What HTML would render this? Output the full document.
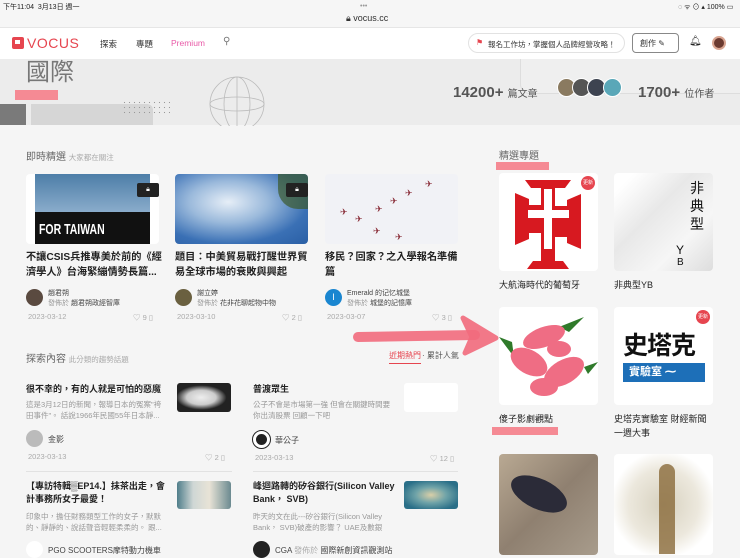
<!DOCTYPE html>
<html><head><meta charset="utf-8"><style>
*{margin:0;padding:0;box-sizing:border-box}
body{width:740px;height:555px;overflow:hidden;background:#f5f5f5;font-family:"Liberation Sans","Noto Sans CJK TC",sans-serif;position:relative;color:#222}
.a{position:absolute;white-space:nowrap}
.t{font-size:10.2px;font-weight:bold;line-height:15px;color:#222}
.s{font-size:7.5px;color:#999;line-height:11px}
.d{font-size:7.5px;color:#aaa}
.g{font-size:7px;color:#999}
.sm{font-size:7px;color:#444}
.av{position:absolute;border-radius:50%}
.tile{position:absolute;background:#fff;border-radius:4px;overflow:hidden}
.cap{position:absolute;font-size:9px;color:#222}
</style></head><body>
<!-- status bar -->
<div class="a" style="left:0;top:0;width:740px;height:27px;background:#f6f6f6"></div>
<div class="a" style="left:3px;top:2px;font-size:7px;color:#222">下午11:04&nbsp;&nbsp;3月13日 週一</div>
<div class="a" style="left:360px;top:3px;font-size:7px;color:#999">•••</div>
<div class="a" style="left:346px;top:13px;font-size:9px;color:#333">🔒︎ vocus.cc</div>
<div class="a" style="left:678px;top:2px;font-size:7px;color:#222">◌ ᯤ ⊙ ▴ 100% ▭</div>
<!-- nav -->
<div class="a" style="left:0;top:27px;width:740px;height:32px;background:#fff;border-top:1px solid #e6e6e6"></div>
<div class="a" style="left:12px;top:37px;width:12px;height:12px;background:#e6454f;border-radius:2px"></div>
<div class="a" style="left:15px;top:40px;width:5px;height:4px;background:#fff"></div>
<div class="a" style="left:27px;top:35px;font-size:14px;color:#e6454f;letter-spacing:0.5px">VOCUS</div>
<div class="a" style="left:100px;top:38px;font-size:8.5px;color:#333">探索</div>
<div class="a" style="left:136px;top:38px;font-size:8.5px;color:#333">專題</div>
<div class="a" style="left:171px;top:38px;font-size:8.5px;color:#e85aa7">Premium</div>
<div class="a" style="left:223px;top:36px;font-size:10px;color:#777">⚲</div>
<div class="a" style="left:468px;top:33px;width:157px;height:20px;border:1px solid #e2e2e2;border-radius:10px;background:#fff"></div>
<div class="a" style="left:476px;top:38px;font-size:8px;color:#e6454f">⚑</div>
<div class="a" style="left:488px;top:39px;font-size:7.5px;color:#333">報名工作坊，掌握個人品牌經營攻略！</div>
<div class="a" style="left:632px;top:33px;width:47px;height:20px;border:1px solid #888;border-radius:4px;background:#fff"></div>
<div class="a" style="left:640px;top:38px;font-size:8px;color:#333">創作 ✎</div>
<div class="a" style="left:689px;top:36px;font-size:10px;color:#222">🔔︎</div>
<div class="av" style="left:712px;top:36px;width:14px;height:14px;background:#6b3a30;border:2px solid #d9a591"></div>
<!-- hero -->
<div class="a" style="left:0;top:59px;width:740px;height:66px;background:#ececec"></div>
<div class="a" style="left:520px;top:59px;width:220px;height:35px;border-bottom:1px solid #ddd;border-left:1px solid #ddd;border-bottom-left-radius:10px;background:#efefef"></div>
<div class="a" style="left:15px;top:90px;width:43px;height:10px;background:#f58a94"></div>
<div class="a" style="left:26px;top:58px;font-size:24px;line-height:30px;color:#777">國際</div>
<div class="a" style="left:0;top:104px;width:26px;height:21px;background:#7a7a7a"></div>
<div class="a" style="left:31px;top:104px;width:122px;height:21px;background:#d6d6d6;border-radius:0 6px 0 0"></div>
<div class="a" style="left:122px;top:100px;width:48px;height:16px;background-image:radial-gradient(#999 0.6px,transparent 0.8px);background-size:5px 5px"></div>
<svg class="a" style="left:205px;top:74px" width="64" height="52"><circle cx="32" cy="30" r="27" fill="none" stroke="#bbb" stroke-width="0.8"/><ellipse cx="32" cy="30" rx="13" ry="27" fill="none" stroke="#bbb" stroke-width="0.8"/><ellipse cx="32" cy="30" rx="27" ry="7" fill="none" stroke="#bbb" stroke-width="0.8"/><line x1="32" y1="3" x2="32" y2="57" stroke="#bbb" stroke-width="0.8"/></svg>
<div class="a" style="left:453px;top:84px;font-size:15px;font-weight:bold;color:#555">14200+ <span style="font-size:10px;font-weight:normal">篇文章</span></div>
<div class="av" style="left:557px;top:78px;width:19px;height:19px;background:#8a7a60;border:1px solid #fff"></div>
<div class="av" style="left:572px;top:78px;width:19px;height:19px;background:#555;border:1px solid #fff"></div>
<div class="av" style="left:587px;top:78px;width:19px;height:19px;background:#3d4350;border:1px solid #fff"></div>
<div class="av" style="left:603px;top:78px;width:19px;height:19px;background:#5aa7b8;border:1px solid #fff"></div>
<div class="a" style="left:638px;top:84px;font-size:15px;font-weight:bold;color:#555">1700+ <span style="font-size:10px;font-weight:normal">位作者</span></div>
<!-- 即時精選 -->
<div class="a" style="left:26px;top:148px;font-size:10px;color:#666">即時精選 <span style="font-size:7.5px;color:#aaa">大家都在關注</span></div>
<div class="a" style="left:26px;top:174px;width:133px;height:70px;background:#fff;border-radius:4px;overflow:hidden">
 <div class="a" style="left:9px;top:0;width:115px;height:70px;background:#111"></div>
 <div class="a" style="left:9px;top:0;width:115px;height:38px;background:linear-gradient(#4d7ea8,#8aaccb)"></div>
 <div class="a" style="left:13px;top:47px;font-size:15px;color:#fff;transform:scaleX(0.7);transform-origin:left;font-weight:bold">FOR TAIWAN</div>
 <div class="a" style="left:111px;top:9px;width:22px;height:14px;background:#222;border-radius:2px;color:#fff;font-size:7px;text-align:center;line-height:14px">🔒︎</div>
</div>
<div class="a" style="left:175px;top:174px;width:133px;height:70px;border-radius:4px;overflow:hidden;background:radial-gradient(ellipse at 40% 40%,#e6eef7 0%,#9ab9db 35%,#3a70b5 70%,#2a5fa5 100%)">
 <div class="a" style="right:0;top:0;width:30px;height:35px;background:#3c5a2c;border-radius:0 0 0 20px;opacity:.7"></div>
 <div class="a" style="left:111px;top:9px;width:22px;height:14px;background:#222;border-radius:2px;color:#fff;font-size:7px;text-align:center;line-height:14px">🔒︎</div>
</div>
<div class="a" style="left:325px;top:174px;width:133px;height:70px;background:#f1f2f6;border-radius:4px;color:#8a2f3a;font-size:9px;line-height:10px">
 <div class="a" style="left:100px;top:5px">✈</div><div class="a" style="left:80px;top:14px">✈</div><div class="a" style="left:65px;top:22px">✈</div><div class="a" style="left:50px;top:30px">✈</div><div class="a" style="left:15px;top:33px">✈</div><div class="a" style="left:30px;top:40px">✈</div><div class="a" style="left:48px;top:52px">✈</div><div class="a" style="left:70px;top:58px">✈</div>
</div>
<div class="a t" style="left:26px;top:250px;white-space:normal;width:142px">不讓CSIS兵推專美於前的《經濟學人》台海緊繃情勢長篇...</div>
<div class="a t" style="left:175px;top:250px;white-space:normal;width:136px">題目：中美貿易戰打醒世界貿易全球市場的衰敗與興起</div>
<div class="a t" style="left:325px;top:250px;white-space:normal;width:136px">移民？回家？之入學報名準備篇</div>
<div class="av" style="left:26px;top:289px;width:17px;height:17px;background:#5a4a40"></div>
<div class="a sm" style="left:48px;top:288px">趙君朔</div><div class="a g" style="left:48px;top:298px">發佈於 <span style="color:#444">趙君朔政經智庫</span></div>
<div class="av" style="left:175px;top:289px;width:17px;height:17px;background:#6a6040"></div>
<div class="a sm" style="left:197px;top:288px">謝立婷</div><div class="a g" style="left:197px;top:298px">發佈於 <span style="color:#444">花非花聊起物中物</span></div>
<div class="av" style="left:325px;top:289px;width:17px;height:17px;background:#1a86d0;color:#fff;font-size:9px;text-align:center;line-height:17px">I</div>
<div class="a sm" style="left:347px;top:288px">Emerald 的记忆城堡</div><div class="a g" style="left:347px;top:298px">發佈於 <span style="color:#444">城堡的記憶庫</span></div>
<div class="a d" style="left:28px;top:312px">2023-03-12</div><div class="a d" style="left:133px;top:312px">♡ 9 ▯</div>
<div class="a d" style="left:177px;top:312px">2023-03-10</div><div class="a d" style="left:282px;top:312px">♡ 2 ▯</div>
<div class="a d" style="left:327px;top:312px">2023-03-07</div><div class="a d" style="left:432px;top:312px">♡ 3 ▯</div>
<!-- 探索內容 -->
<div class="a" style="left:26px;top:350px;font-size:10px;color:#666">探索內容 <span style="font-size:7.5px;color:#aaa">此分類的趨勢話題</span></div>
<div class="a" style="left:389px;top:350px;font-size:8px;color:#e6454f;border-bottom:1.5px solid #e6454f;padding-bottom:2px">近期熱門</div>
<div class="a" style="left:422px;top:350px;font-size:8px;color:#555">· 累計人氣</div>
<div class="a" style="left:26px;top:383px;font-size:9px;font-weight:bold;line-height:13px">很不幸的，有的人就是可怕的惡魔</div>
<div class="a s" style="left:26px;top:399px;white-space:normal;width:140px">這是3月12日的新聞，報導日本的冤案"袴田事件"。 話說1966年民國55年日本靜...</div>
<div class="a" style="left:177px;top:383px;width:54px;height:29px;background:radial-gradient(ellipse at 45% 50%,#eee 0%,#ccc 35%,#222 60%);border-radius:3px"></div>
<div class="av" style="left:26px;top:430px;width:17px;height:17px;background:#bbb"></div>
<div class="a sm" style="left:48px;top:434px;font-size:8px">金影</div>
<div class="a d" style="left:28px;top:452px">2023-03-13</div><div class="a d" style="left:205px;top:452px">♡ 2 ▯</div>
<div class="a" style="left:253px;top:383px;font-size:9px;font-weight:bold;line-height:13px">普渡眾生</div>
<div class="a s" style="left:253px;top:399px;white-space:normal;width:140px">公子不會是市場第一強 但會在關鍵時間要你出清股票 回顧一下吧</div>
<div class="a" style="left:404px;top:383px;width:54px;height:29px;background:#fff;border-radius:3px"></div>
<div class="av" style="left:253px;top:431px;width:17px;height:17px;background:#222;border:3px solid #fff;outline:1px solid #222"></div>
<div class="a sm" style="left:275px;top:435px;font-size:8px">華公子</div>
<div class="a d" style="left:255px;top:453px">2023-03-13</div><div class="a d" style="left:430px;top:453px">♡ 12 ▯</div>
<div class="a" style="left:26px;top:471px;width:206px;height:1px;background:#e2e2e2"></div>
<div class="a" style="left:253px;top:471px;width:205px;height:1px;background:#e2e2e2"></div>
<div class="a" style="left:26px;top:480px;white-space:normal;width:142px;font-size:9px;font-weight:bold;line-height:13px">【專訪特輯▒EP14.】抹茶出走，會計事務所女子最愛！</div>
<div class="a s" style="left:26px;top:511px;white-space:normal;width:140px">印象中，擔任財務類型工作的女子，默默的、靜靜的、說話聲音輕輕柔柔的。 跟...</div>
<div class="a" style="left:177px;top:481px;width:54px;height:28px;background:linear-gradient(90deg,#4f7d8a,#cfd7d5 30%,#e8e3d6 60%,#6b8a90);border-radius:3px"></div>
<div class="av" style="left:26px;top:541px;width:17px;height:17px;background:#fff"></div>
<div class="a sm" style="left:48px;top:545px;font-size:8px">PGO SCOOTERS摩特動力機車</div>
<div class="a" style="left:253px;top:480px;white-space:normal;width:145px;font-size:9px;font-weight:bold;line-height:13px">峰迴路轉的矽谷銀行(Silicon Valley Bank， SVB)</div>
<div class="a s" style="left:253px;top:511px;white-space:normal;width:142px;height:22px;overflow:hidden">昨天的文在此---矽谷銀行(Silicon Valley Bank， SVB)破產的影響？ UAE及數銀正...</div>
<div class="a" style="left:404px;top:481px;width:54px;height:28px;background:radial-gradient(ellipse at 50% 50%,#d9cfa8 0%,#6fa3a8 40%,#2a6f88 80%);border-radius:3px"></div>
<div class="av" style="left:253px;top:541px;width:17px;height:17px;background:#222"></div>
<div class="a sm" style="left:275px;top:545px;font-size:8px">CGA <span style="color:#aaa">發佈於</span> 國際新創資訊觀測站</div>
<!-- 精選專題 -->
<div class="a" style="left:496px;top:162px;width:53px;height:8px;background:#f58a94"></div>
<div class="a" style="left:499px;top:147px;font-size:10px;color:#666">精選專題</div>
<div class="tile" style="left:499px;top:173px;width:99px;height:98px">
 <svg width="99" height="98" viewBox="0 0 99 98"><g fill="#d71920"><path d="M26 7h46l-6 8H56v18h12v-6l14-6v55l-14-6v-6H56v24h8l6 8H28l6-8h8V60H30v6l-14 6V20l14 6v6h12V15H32z"/></g><path d="M45 16h8v21h17v8H53v31h-8V45H29v-8h16z" fill="#fff"/></svg>
 <div class="a" style="right:3px;top:3px;width:14px;height:14px;border-radius:50%;background:#e6454f;color:#fff;font-size:5px;text-align:center;line-height:14px">更新</div>
</div>
<div class="tile" style="left:614px;top:173px;width:99px;height:98px;background:linear-gradient(135deg,#fff 10%,#e8e8e8 40%,#f6f6f6 70%,#ddd)">
 <div class="a" style="left:76px;top:6px;font-size:14px;line-height:18px;color:#111;white-space:normal;width:16px">非典型</div>
 <div class="a" style="left:62px;top:70px;font-size:12px;color:#111">Y</div><div class="a" style="left:63px;top:84px;font-size:10px;color:#111">B</div>
</div>
<div class="cap" style="left:499px;top:278px">大航海時代的葡萄牙</div>
<div class="cap" style="left:614px;top:278px">非典型YB</div>
<div class="tile" style="left:499px;top:307px;width:99px;height:98px">
 <svg width="99" height="98"><g fill="#2f7a2a"><path d="M60 20l25-10-15 15z"/><path d="M0 30l15 20-2-15z"/><path d="M85 60l14-5-10 12z"/></g><g fill="#ef6d84"><ellipse cx="45" cy="30" rx="22" ry="10" transform="rotate(-20 45 30)"/><ellipse cx="30" cy="55" rx="20" ry="12" transform="rotate(30 30 55)"/><ellipse cx="65" cy="65" rx="22" ry="12" transform="rotate(-30 65 65)"/><ellipse cx="45" cy="80" rx="14" ry="9"/><ellipse cx="60" cy="42" rx="12" ry="8"/></g></svg>
</div>
<div class="tile" style="left:614px;top:307px;width:99px;height:98px">
 <div class="a" style="left:9px;top:23px;font-size:25px;font-weight:bold;color:#111;letter-spacing:-1px;font-family:'Noto Sans CJK TC',sans-serif;line-height:28px">史塔克</div>
 <div class="a" style="left:9px;top:56px;width:82px;height:19px;background:#1d6fb8;color:#fff;font-size:11px;font-weight:bold;line-height:19px;padding-left:6px">實驗室 ⁓</div>
 <div class="a" style="right:3px;top:3px;width:14px;height:14px;border-radius:50%;background:#e6454f;color:#fff;font-size:5px;text-align:center;line-height:14px">更新</div>
</div>
<div class="a" style="left:492px;top:427px;width:66px;height:8px;background:#f58a94"></div>
<div class="cap" style="left:499px;top:412px">傻子影劇觀點</div>
<div class="cap" style="left:614px;top:412px;line-height:14px">史塔克實驗室 財經新聞<br>一週大事</div>
<div class="tile" style="left:499px;top:454px;width:99px;height:101px;background:linear-gradient(135deg,#b9a993,#8f8070 50%,#a89c8c)">
 <div class="a" style="left:10px;top:25px;width:60px;height:30px;border-radius:50%;background:#2b2b38;transform:rotate(25deg)"></div>
</div>
<div class="tile" style="left:614px;top:454px;width:99px;height:101px;background:radial-gradient(ellipse at 50% 50%,#d7d1bf 0%,#ece8dd 50%,#fff 75%)">
 <div class="a" style="left:45px;top:10px;width:16px;height:90px;background:#8a6a3a;border-radius:8px 8px 0 0;opacity:.8"></div>
</div>
<!-- arrow -->
<svg class="a" style="left:350px;top:308px" width="150" height="50"><path d="M8 29 L125 27" stroke="#f26b7d" stroke-width="10" stroke-linecap="round" fill="none" opacity=".9"/><path d="M113 10 L146 30 L115 45 L122 29 Z" fill="#f26b7d" stroke="#f26b7d" stroke-width="5" stroke-linejoin="round" opacity=".9"/></svg>
</body></html>
